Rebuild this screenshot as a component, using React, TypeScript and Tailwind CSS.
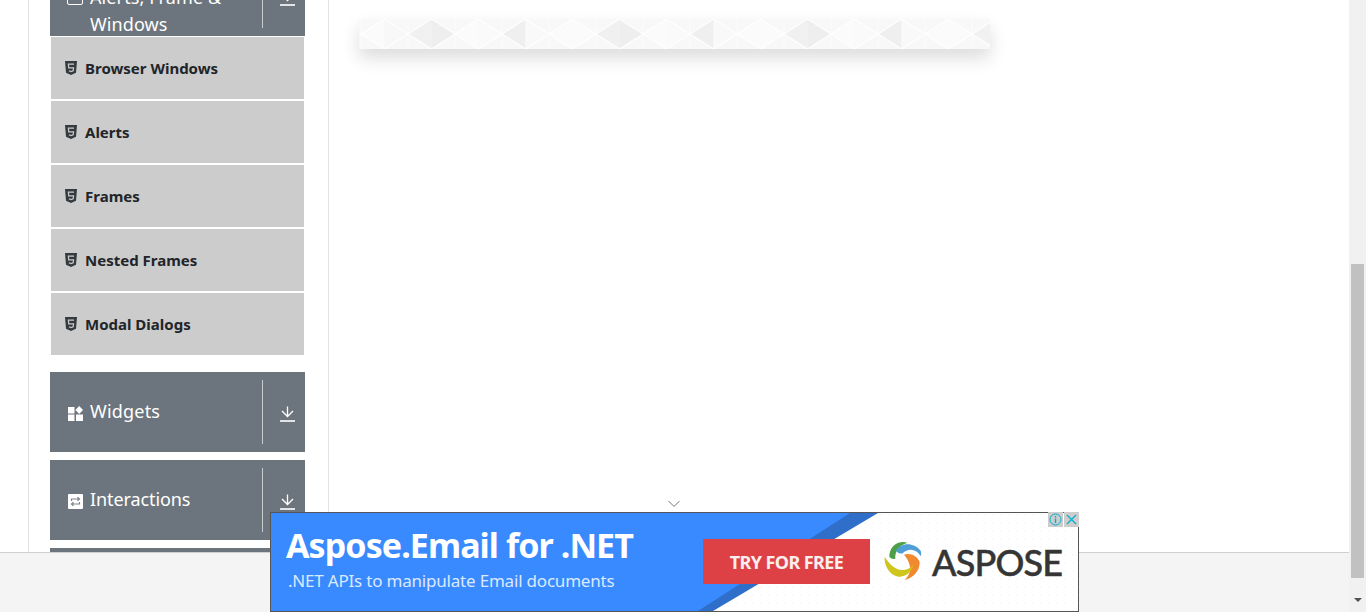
const subItems = ["Browser Windows", "Alerts", "Frames", "Nested Frames", "Modal Dialogs"];

// shade of the left and right half of each diamond in the faded banner
const diamonds = [
  ["#fbfbfb", "#f8f8f8"],
  ["#f0f0f0", "#eeeeee"],
  ["#fbfbfb", "#fafafa"],
  ["#efefef", "#f9f9f9"],
  ["#fbfbfb", "#fbfbfb"],
  ["#f0f0f0", "#eeeeee"],
  ["#fbfbfb", "#fafafa"],
  ["#efefef", "#f9f9f9"],
  ["#fbfbfb", "#fbfbfb"],
  ["#f0f0f0", "#eeeeee"],
  ["#fbfbfb", "#fafafa"],
  ["#efefef", "#f9f9f9"],
  ["#fbfbfb", "#fbfbfb"],
  ["#f1f1f1", "#f1f1f1"],
];

function Triangles() {
  return (
    <svg width="631" height="30" viewBox="0 0 631 30" className="block">
      <rect width="631" height="30" fill="#f8f8f8" />
      {diamonds.map(([left, right], i) => (
        <g key={i} transform={`translate(${2 + i * 47} 0)`}>
          <path d="M0 15 L23.5 0 V30 Z" fill={left} />
          <path d="M47 15 L23.5 0 V30 Z" fill={right} />
          <path d="M0 15 L23.5 0 L47 15 L23.5 30 Z" fill="none" stroke="#ffffff" strokeWidth="1.2" strokeOpacity="0.9" />
          <path d="M0 0 V30" stroke="#ffffff" strokeWidth="0.8" strokeOpacity="0.7" />
        </g>
      ))}
    </svg>
  );
}

function ArrowDown() {
  return (
    <svg width="15" height="16" viewBox="0 0 15 16" fill="none" stroke="white" strokeWidth="1.3">
      <path d="M7.5 0.5 V10.5 M2 5 L7.5 10.5 L13 5" />
      <path d="M0 15 H15" strokeWidth="1.6" />
    </svg>
  );
}

function Html5Icon() {
  return (
    <svg width="12" height="14" viewBox="0 0 12 14" className="mr-2 mt-[-1px] shrink-0">
      <path d="M0 0 H12 L11 11.8 L6 14 L1 11.8 Z" fill="#343a40" />
      <path d="M9 3.2 H3.4 L3.7 6.8 H8.5 L8.2 9.8 L6 10.6 L3.9 9.8" fill="none" stroke="#cccccc" strokeWidth="1.2" />
    </svg>
  );
}

function GroupHeader({ label, icon, className }: { label: React.ReactNode; icon: React.ReactNode; className?: string }) {
  return (
    <div className={`flex h-20 w-[255px] shrink-0 items-center bg-[#6c757d] text-white ${className ?? ""}`}>
      <div className="-mt-[1px] flex flex-1 items-center pl-[17px] text-[18px] leading-[27px]">
        <span className="mr-[7px] mt-[3px] flex w-4 shrink-0 justify-center">{icon}</span>
        {label}
      </div>
      <div className="flex h-16 w-[43px] items-center justify-center border-l border-[#c8cbce] pl-[7px] pt-[3px]">
        <ArrowDown />
      </div>
    </div>
  );
}

export default function App() {
  return (
    <div className="relative h-[612px] w-[1366px] overflow-hidden bg-white font-['Noto_Sans',sans-serif]">
      <div className="flex h-[552px]">
        {/* Sidebar */}
        <div className="ml-7 flex h-full w-[301px] flex-col overflow-hidden border-x border-[#e3e3e3] pl-[21px]">
          <GroupHeader
            className="-mt-[44px]"
            label={
              <span className="mt-[30px] tracking-[0.1px]">
                Alerts, Frame &<br />
                Windows
              </span>
            }
            icon={<span className="h-[15px] w-[16px] rounded-[2px] border border-white" />}
          />
          <div className="ml-px mt-px flex w-[253px] shrink-0 flex-col gap-[2px]">
            {subItems.map((item) => (
              <div key={item} className="flex h-[62px] items-center bg-[#cccccc] pl-[14px] text-[15px] font-bold text-[#212529]">
                <Html5Icon />
                {item}
              </div>
            ))}
          </div>
          <div className="mt-[17px] flex shrink-0 flex-col gap-2">
            <GroupHeader
              label={<span className="tracking-[0.2px]">Widgets</span>}
              icon={
                <svg width="15" height="15" viewBox="0 0 15 15" fill="white">
                  <rect x="0" y="1" width="6.5" height="6.5" />
                  <rect x="0" y="8.5" width="6.5" height="6.5" />
                  <rect x="8" y="8.5" width="7" height="6.5" />
                  <path d="M11.2 0 L15 4 L11.2 8 L7.4 4 Z" />
                </svg>
              }
            />
            <GroupHeader
              label={<span className="tracking-[-0.1px]">Interactions</span>}
              icon={
                <span className="flex h-[15px] w-[15px] items-center justify-center rounded-[1px] bg-white">
                  <svg width="11" height="11" viewBox="0 0 11 11" fill="none" stroke="#7d858c" strokeWidth="1.2">
                    <path d="M1.5 5 V3 H9 M7.5 1.2 L9.5 3 L7.5 4.8" />
                    <path d="M9.5 6 V8 H2 M3.5 6.2 L1.5 8 L3.5 9.8" />
                  </svg>
                </span>
              }
            />
            <div className="h-5 w-[255px] bg-[#6c757d]" />
          </div>
        </div>

        {/* Main */}
        <div className="flex-1">
          <div className="ml-[30px] mt-[19px] w-[631px] shadow-[0_9px_18px_rgba(0,0,0,0.14)]">
            <Triangles />
          </div>
        </div>
        <div className="h-full w-[17px]" />
      </div>

      {/* Footer band */}
      <div className="h-[60px] w-[1349px] border-t border-[#cfcfcf] bg-[#f4f4f4]" />

      {/* Scrollbar */}
      <div className="absolute right-0 top-0 flex h-[612px] w-[17px] flex-col bg-[#f1f1f1]">
        <div className="ml-[2px] mt-[264px] h-[314px] w-[13px] bg-[#c1c1c1]" />
        <div className="mx-auto mt-[20px] h-0 w-0 border-x-[4px] border-t-[4px] border-x-transparent border-t-[#505050]" />
      </div>

      {/* Ad */}
      <div className="absolute left-[270px] top-[512px] h-[100px] w-[809px]">
        <div className="absolute left-[398px] top-[-12px]">
          <svg width="12" height="8" viewBox="0 0 12 8" fill="none" stroke="#777" strokeWidth="1">
            <path d="M0.5 1 L6 6.5 L11.5 1" />
          </svg>
        </div>
        <div className="relative h-full w-full overflow-hidden border border-[#555] bg-white">
          <svg width="807" height="98" viewBox="0 0 807 98" className="absolute left-0 top-0">
            <defs>
              <pattern id="dots" width="8" height="8" patternUnits="userSpaceOnUse">
                <circle cx="2" cy="2" r="0.7" fill="#f0f0f0" />
              </pattern>
            </defs>
            <rect width="807" height="98" fill="url(#dots)" />
            <path d="M0 0 H607 L442 98 H0 Z" fill="#2f6fca" />
            <path d="M0 0 H579 L427 98 H0 Z" fill="#398aff" />
          </svg>
          <div className="relative pl-[15px] pt-[9px] text-white">
            <div className="text-[34px] font-bold leading-[47px] tracking-[-0.92px]">Aspose.Email for .NET</div>
            <div className="pl-[2px] text-[17px] leading-[24px] tracking-[-0.2px] text-[#dbe9ff]">.NET APIs to manipulate Email documents</div>
          </div>
          <div className="absolute left-[432px] top-[26px] flex h-[45px] w-[167px] items-center justify-center bg-[#dd4145] pt-[2px] text-[18px] font-bold tracking-[-0.6px] text-[#fbeeee]">
            TRY FOR FREE
          </div>
          <svg width="50" height="50" viewBox="0 0 150 150" className="absolute left-[609px] top-[21px]">
            <path d="M82 26 C55 18 28 36 28 68 C33 74 40 76 46 74 C44 52 58 34 82 26 Z" fill="#4e9f45" />
            <path d="M48 50 C60 26 100 22 122 50 C124 56 124 62 122 66 C108 44 84 42 68 58 C62 60 54 58 48 50 Z" fill="#4f9fd6" />
            <path d="M72 62 C92 56 112 66 119 84 C120 110 100 132 74 138 C92 120 100 96 72 62 Z" fill="#f18a2e" />
            <path d="M14 68 C12 100 34 128 60 128 C78 128 94 114 100 94 C86 108 66 112 50 104 C36 98 24 84 14 68 Z" fill="#cfc51f" />
          </svg>
          <span className="absolute left-[661px] top-[29px] text-[36px] font-medium leading-[40px] tracking-[-0.8px] text-[#353535] [-webkit-text-stroke:0.5px_#353535] font-['Lato',sans-serif]">ASPOSE</span>
        </div>
        <div className="absolute right-0 top-0 flex h-[15px] gap-px">
          <span className="flex w-[15px] items-center justify-center bg-[#cdcdcd]">
            <svg width="13" height="13" viewBox="0 0 13 13" fill="none" stroke="#00aecd" strokeWidth="1">
              <circle cx="6.5" cy="6.5" r="5.5" />
              <path d="M6.5 5.5 V10 M6.5 3 V4.4" strokeWidth="1.4" />
            </svg>
          </span>
          <span className="flex w-[15px] items-center justify-center bg-[#cdcdcd]">
            <svg width="11" height="11" viewBox="0 0 11 11" fill="none" stroke="#00aecd" strokeWidth="1.2">
              <path d="M1 1 L10 10 M10 1 L1 10" />
            </svg>
          </span>
        </div>
      </div>
    </div>
  );
}
